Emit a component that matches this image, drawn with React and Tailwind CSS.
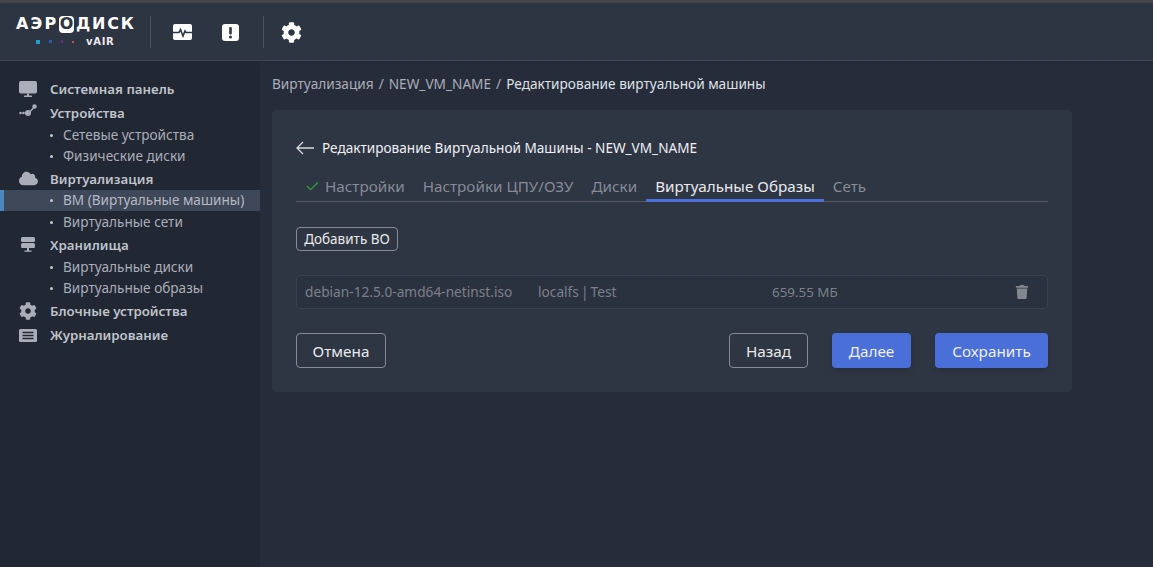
import { FaCloud, FaCog, FaTrash } from 'react-icons/fa'
import { FiCheck } from 'react-icons/fi'

const PulseIcon = () => (
  <svg width="19" height="16" viewBox="0 0 19 16" fill="none">
    <rect width="19" height="16" rx="2" fill="#fff" />
    <path d="M0 8.500h6l1.500-3 2.500 6.500 2-5 1 1.500h6" stroke="#2d3442" strokeWidth="1.600" />
  </svg>
)

const AlertIcon = () => (
  <svg width="17" height="17" viewBox="0 0 17 17">
    <rect width="17" height="17" rx="3" fill="#fff" />
    <rect x="7.200" y="3" width="2.600" height="7.500" rx="1" fill="#2d3442" />
    <circle cx="8.500" cy="13" r="1.500" fill="#2d3442" />
  </svg>
)

const BackArrow = () => (
  <svg width="18" height="14" viewBox="0 0 18 14" fill="none" stroke="#d8dae0" strokeWidth="1.300">
    <path d="M18 7H1M7 1L1 7l6 6" />
  </svg>
)

const MonitorIcon = () => (
  <svg width="18" height="18" viewBox="0 0 18 18" fill="#a9aeb9">
    <rect y="1" width="18" height="12.500" rx="2" />
    <rect x="8" y="13.500" width="2" height="2.500" />
    <rect x="5" y="15.500" width="8" height="1.500" rx="0.500" />
  </svg>
)

const StorageIcon = () => (
  <svg width="14" height="16" viewBox="0 0 14 16" fill="#a9aeb9">
    <rect width="14" height="5" rx="1.500" />
    <rect y="6" width="14" height="5" rx="1.500" />
    <rect x="6" y="11" width="2" height="3" />
    <rect x="3.500" y="13.500" width="7" height="1.300" />
  </svg>
)

const DevicesIcon = () => (
  <svg width="20" height="14" viewBox="0 0 20 14" fill="#a9aeb9" className="-mt-1">
    <circle cx="1.500" cy="9" r="1.300" />
    <circle cx="4.500" cy="9" r="1.300" />
    <circle cx="9" cy="9" r="3" />
    <circle cx="15.500" cy="2.500" r="2.200" />
    <path d="M9 8.500l6-6 1 1-6 6z" />
  </svg>
)

const LogIcon = () => (
  <svg width="18" height="13" viewBox="0 0 18 13">
    <rect width="18" height="13" rx="1.500" fill="#a9aeb9" />
    <path d="M3.500 3.500h11M3.500 6.500h11M3.500 9.500h11" stroke="#212733" strokeWidth="1.400" />
  </svg>
)

const NavTop = ({ icon, label, h = 'h-6' }) => (
  <div className={`flex items-center ${h}`}>
    <div className="w-[50px] pl-[19px] flex items-center shrink-0">{icon}</div>
    <span className="pt-0.5 text-[13.300px] font-semibold text-[#bfc3cc]">{label}</span>
  </div>
)

const NavSub = ({ label, active, h = 'h-[21px]' }) => (
  <div className={`flex items-center ${h} ${active ? 'bg-[#3f4859] border-l-4 border-[#4a86c0]' : ''}`}>
    <div className={`${active ? 'pl-[46px] w-[59px]' : 'pl-[50px] w-[63px]'} shrink-0`}>
      <div className="w-[3px] h-[3px] rounded-full bg-[#c4c8d0]"></div>
    </div>
    <span className={`text-[13.600px] ${active ? 'text-[#b4b9c4]' : 'text-[#a9aeb9]'}`}>{label}</span>
  </div>
)

const Sidebar = () => (
  <div className="w-[260px] shrink-0 bg-[#212733] pt-4">
    <NavTop icon={<MonitorIcon />} label="Системная панель" />
    <NavTop icon={<DevicesIcon />} label="Устройства" />
    <NavSub label="Сетевые устройства" />
    <NavSub label="Физические диски" />
    <NavTop icon={<FaCloud size={19} color="#a9aeb9" />} label="Виртуализация" h="h-[23px]" />
    <NavSub label="ВМ (Виртуальные машины)" active />
    <NavSub label="Виртуальные сети" h="h-[22px]" />
    <NavTop icon={<div className="ml-0.5 flex"><StorageIcon /></div>} label="Хранилища" />
    <NavSub label="Виртуальные диски" />
    <NavSub label="Виртуальные образы" />
    <NavTop icon={<FaCog size={18} color="#a9aeb9" />} label="Блочные устройства" />
    <NavTop icon={<LogIcon />} label="Журналирование" />
  </div>
)

const Tab = ({ label, active, check, className = '' }) => (
  <div className={`h-[27px] flex items-center border-b-[3px] pb-0.5 -mb-px ${active ? 'border-[#4a6fd8] text-[#e8eaee]' : 'border-transparent text-[#868b95]'} ${className}`}>
    {check && <FiCheck size={15} color="#2fa336" className="mr-[5px]" />}
    <span className="text-[15.240px]">{label}</span>
  </div>
)

const Button = ({ label, primary, className = '' }) => (
  <button className={`h-[35px] pt-px rounded text-[15.300px] ${primary ? 'bg-[#4a6fd8] text-[#eef0f4] shadow-md' : 'border border-[#868b95] text-[#e8eaee]'} ${className}`}>
    {label}
  </button>
)

const Logo = () => (
  <div className="w-[150px] shrink-0 flex flex-col items-start pl-4 font-['DejaVu_Sans',sans-serif]">
    <div className="flex items-center h-[17px] text-[16px] font-bold text-white">
      <span className="w-[43px] tracking-[2.200px]">АЭР</span>
      <span className="bg-white text-[#2d3442] w-[15px] h-[17px] rounded-sm flex items-center justify-center mr-0.5">О</span>
      <span className="tracking-[1.800px]">ДИСК</span>
    </div>
    <div className="flex items-center mt-[2px]">
      <div className="w-1 h-1 bg-[#1d9fd0] ml-5 mr-[9px]"></div>
      <div className="w-[3px] h-[3px] bg-[#2460b0] mr-[9px]"></div>
      <div className="w-[2px] h-[3px] bg-[#6a2a90] mr-[9px]"></div>
      <div className="w-[2px] h-[2px] bg-[#c04a60] mr-[12px]"></div>
      <span className="text-[10px] leading-[14px] font-bold text-[#e8eaee] tracking-[0.700px]">vAIR</span>
    </div>
  </div>
)

export default function App() {
  return (
    <div className="w-[1153px] h-[567px] overflow-hidden flex flex-col bg-[#262c39] font-['Noto_Sans',sans-serif]">
      <div className="h-[3px] bg-[#45464a]"></div>
      <div className="h-[58px] pt-px bg-[#2d3442] border-b border-[#3f4859] flex items-center shadow-sm">
        <Logo />
        <div className="w-px h-8 bg-[#46566b]"></div>
        <div className="ml-[22px]"><PulseIcon /></div>
        <div className="ml-[30px]"><AlertIcon /></div>
        <div className="w-px h-8 bg-[#46566b] ml-6"></div>
        <div className="ml-[17px]"><FaCog size={21} color="#fff" /></div>
      </div>
      <div className="flex flex-1 min-h-0">
        <Sidebar />
        <div className="flex-1 px-3 pt-[13px]">
          <div className="h-5 flex items-center gap-[5px] text-[13.650px] text-[#a9aeb9] mb-4">
            <span>Виртуализация</span>
            <span>/</span>
            <span>NEW_VM_NAME</span>
            <span>/</span>
            <span className="text-[#dfe1e6]">Редактирование виртуальной машины</span>
          </div>
          <div className="w-[800px] h-[282px] bg-[#2e3543] rounded px-6 pt-[27px]">
            <div className="flex items-center h-[22px] text-[13.600px] text-[#eef0f4]">
              <div className="mr-2 flex"><BackArrow /></div>
              Редактирование Виртуальной Машины - NEW_VM_NAME
            </div>
            <div className="flex mt-[16px] border-b border-[#555a63] h-[27px]">
              <Tab label="Настройки" check className="px-[9px]" />
              <Tab label="Настройки ЦПУ/ОЗУ" className="px-[9px]" />
              <Tab label="Диски" className="px-[9px]" />
              <Tab label="Виртуальные Образы" active className="px-[9px]" />
              <Tab label="Сеть" className="px-[9px]" />
            </div>
            <button className="mt-[25px] h-6 w-[102px] block rounded border border-[#868b95] text-[13.500px] text-[#e8eaee]">Добавить ВО</button>
            <div className="mt-6 h-[34px] rounded-sm border border-[#374250] bg-[#2b323f] flex items-center text-[13.700px] text-[#7b808b]">
              <span className="w-[241px] pl-2 shrink-0">debian-12.5.0-amd64-netinst.iso</span>
              <span className="w-[234px] shrink-0 [word-spacing:-1.500px]">localfs | Test</span>
              <span className="flex-1 text-[13.400px]">659.55 МБ</span>
              <FaTrash size={14} color="#83878f" className="mr-[18px]" />
            </div>
            <div className="mt-6 flex">
              <Button label="Отмена" className="w-[90px]" />
              <Button label="Назад" className="w-[79px] ml-auto" />
              <Button label="Далее" primary className="w-[79px] ml-6" />
              <Button label="Сохранить" primary className="w-[113px] ml-6" />
            </div>
          </div>
        </div>
      </div>
    </div>
  )
}
